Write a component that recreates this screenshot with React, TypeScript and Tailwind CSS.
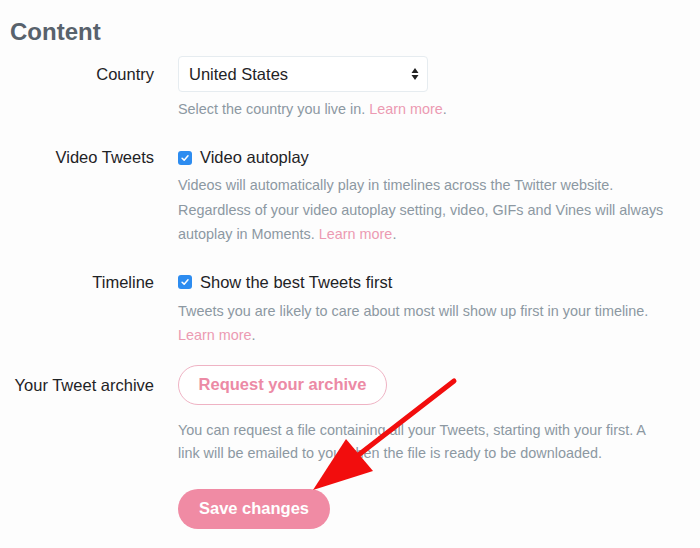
import React from "react";

const font = { fontFamily: '"Liberation Sans", Arial, sans-serif' };

function Check() {
  return (
    <span className="mt-[1px] flex h-[14px] w-[14px] shrink-0 items-center justify-center rounded-[3px] bg-[#2d8cf0]">
      <svg viewBox="0 0 12 12" className="h-[10px] w-[10px]">
        <path d="M2.5 6.3 L5 8.6 L9.6 3.4" fill="none" stroke="#fff" strokeWidth="1.8" strokeLinecap="round" strokeLinejoin="round" />
      </svg>
    </span>
  );
}

function Learn({ dot = true }: { dot?: boolean }) {
  return (
    <>
      <span className="text-[#ec9ab2]">Learn more</span>
      {dot ? "." : ""}
    </>
  );
}

export default function App() {
  return (
    <div style={font} className="relative h-[548px] w-[700px] overflow-hidden bg-[#fdfdfd] text-[#1f2326]">
      <h1 className="ml-[10px] mt-[16px] text-[24px] font-bold leading-[32px] text-[#58626c]">Content</h1>

      <div className="mt-[8px] grid grid-cols-[154px_1fr] gap-x-[24px]">
        {/* Country */}
        <div className="text-right text-[16.5px] leading-[36px]">Country</div>
        <div>
          <div className="flex h-[36px] w-[250px] items-center justify-between rounded-[4px] border border-[#e6ecf0] bg-white pl-[10px] pr-[8px] text-[16.5px]">
            <span>United States</span>
            <svg viewBox="0 0 8 14" className="h-[14px] w-[8px]">
              <path d="M4 1 L7.5 6 L0.5 6 Z M4 13 L7.5 8 L0.5 8 Z" fill="#222" />
            </svg>
          </div>
          <p className="mt-[7px] text-[14.4px] leading-[20px] text-[#8c98a2]">
            Select the country you live in. <Learn />
          </p>
        </div>

        {/* Video Tweets */}
        <div className="mt-[26px] text-right text-[16.5px] leading-[24px]">Video Tweets</div>
        <div className="mt-[26px]">
          <label className="flex items-center gap-[8px] text-[16.5px] leading-[24px]">
            <Check />
            Video autoplay
          </label>
          <p className="mt-[4px] whitespace-nowrap text-[14.4px] leading-[24.5px] text-[#8c98a2]">
            <span className="block">Videos will automatically play in timelines across the Twitter website.</span>
            <span className="block">Regardless of your video autoplay setting, video, GIFs and Vines will always</span>
            <span className="block">
              autoplay in Moments. <Learn />
            </span>
          </p>
        </div>

        {/* Timeline */}
        <div className="mt-[23px] text-right text-[16.5px] leading-[24px]">Timeline</div>
        <div className="mt-[23px]">
          <label className="flex items-center gap-[8px] text-[16.5px] leading-[24px]">
            <Check />
            Show the best Tweets first
          </label>
          <p className="mt-[5px] whitespace-nowrap text-[14.4px] leading-[24px] text-[#8c98a2]">
            <span className="block">Tweets you are likely to care about most will show up first in your timeline.</span>
            <span className="block">
              <Learn />
            </span>
          </p>
        </div>

        {/* Archive */}
        <div className="mt-[18px] text-right text-[16.5px] leading-[40px]">Your Tweet archive</div>
        <div className="mt-[18px]">
          <button className="h-[40px] w-[209px] rounded-full border border-[#efb3c4] bg-white text-[16.5px] font-bold text-[#ec8aa5]">
            Request your archive
          </button>
          <p className="mt-[14px] whitespace-nowrap text-[14.4px] leading-[23px] text-[#8c98a2]">
            <span className="block">You can request a file containing all your Tweets, starting with your first. A</span>
            <span className="block">link will be emailed to you when the file is ready to be downloaded.</span>
          </p>
          <button className="mt-[24px] h-[40px] w-[152px] rounded-full bg-[#f08ba4] text-[16.5px] font-bold text-white">
            Save changes
          </button>
        </div>
      </div>

      {/* red annotation arrow */}
      <svg className="pointer-events-none absolute inset-0" width="700" height="548" viewBox="0 0 700 548">
        <line x1="454" y1="381" x2="352" y2="460" stroke="#f20d0d" strokeWidth="5" strokeLinecap="round" />
        <polygon points="313,490 346,439 373,471" fill="#f20d0d" />
      </svg>
    </div>
  );
}
